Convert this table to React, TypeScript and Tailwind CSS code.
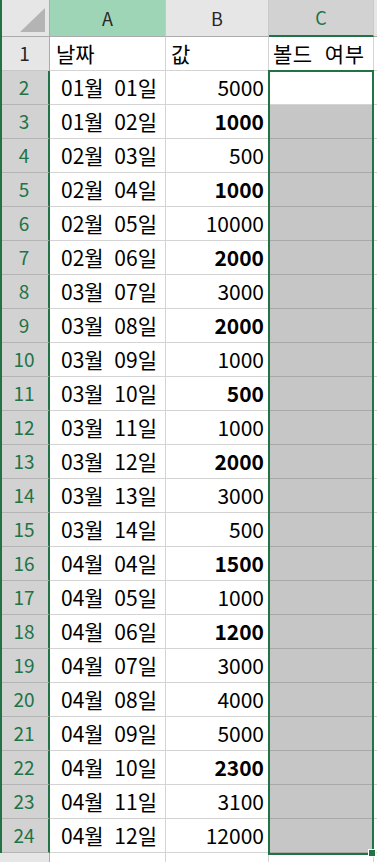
import React from "react";

const data: [string, string, boolean][] = [
  ["01월 01일", "5000", false],
  ["01월 02일", "1000", true],
  ["02월 03일", "500", false],
  ["02월 04일", "1000", true],
  ["02월 05일", "10000", false],
  ["02월 06일", "2000", true],
  ["03월 07일", "3000", false],
  ["03월 08일", "2000", true],
  ["03월 09일", "1000", false],
  ["03월 10일", "500", true],
  ["03월 11일", "1000", false],
  ["03월 12일", "2000", true],
  ["03월 13일", "3000", false],
  ["03월 14일", "500", false],
  ["04월 04일", "1500", true],
  ["04월 05일", "1000", false],
  ["04월 06일", "1200", true],
  ["04월 07일", "3000", false],
  ["04월 08일", "4000", false],
  ["04월 09일", "5000", false],
  ["04월 10일", "2300", true],
  ["04월 11일", "3100", false],
  ["04월 12일", "12000", false],
];

const font = { fontFamily: '"Noto Sans CJK KR", "Noto Sans", sans-serif' };

export default function App() {
  return (
    <div
      className="relative w-[377px] h-[862px] overflow-hidden bg-white text-black"
      style={font}
    >
      <div className="grid grid-cols-[50px_116px_103px_105px_1fr]">
        {/* header row */}
        <div className="h-[37px] bg-[#e6e6e6] border-r border-b border-[#ababab] flex items-end justify-end pr-[3px] pb-[3px]">
          <svg width="26" height="25" viewBox="0 0 26 25">
            <polygon points="25,0 25,24 0,24" fill="#b4b4b4" />
          </svg>
        </div>
        <div className="h-[37px] bg-[#9fd5b7] border-r border-b border-r-[#c8c8c8] border-b-[#ababab] flex items-center justify-center text-[18px] text-[#262626]">
          A
        </div>
        <div className="h-[37px] bg-[#e6e6e6] border-r border-b border-r-[#c8c8c8] border-b-[#ababab] flex items-center justify-center text-[18px] text-[#262626]">
          B
        </div>
        <div className="h-[37px] bg-[#d2d2d2] border-r border-r-[#c8c8c8] border-b-2 border-b-[#217346] flex items-center justify-center text-[18px] text-[#217346]">
          C
        </div>
        <div className="h-[37px] bg-[#e6e6e6] border-b border-[#ababab]" />

        {/* row 1 */}
        <div className="h-[34px] bg-[#e6e6e6] border-r border-b border-r-[#ababab] border-b-[#c8c8c8] flex items-center justify-center text-[19px] text-[#262626]">
          1
        </div>
        <div className="h-[34px] border-r border-b border-[#d4d4d4] flex items-center pl-[6px] text-[21px]">
          날짜
        </div>
        <div className="h-[34px] border-r border-b border-[#d4d4d4] flex items-center pl-[5px] text-[21px]">
          값
        </div>
        <div className="h-[34px] border-r border-b border-[#d4d4d4] flex items-center pl-[4px] text-[21px] whitespace-nowrap [word-spacing:7px] tracking-[0.5px]">
          볼드 여부
        </div>
        <div className="h-[34px] border-b border-[#d4d4d4]" />

        {data.map(([d, v, b], i) => (
          <React.Fragment key={i}>
            <div className="h-[34px] bg-[#d2d2d2] border-r-2 border-b border-r-[#217346] border-b-[#b4b4b4] flex items-center justify-center text-[19px] text-[#217346]">
              {i + 2}
            </div>
            <div className="h-[34px] border-r border-b border-[#d4d4d4] flex items-center pl-[11px] text-[21px] whitespace-nowrap [word-spacing:6px]">
              {d}
            </div>
            <div
              className={
                "h-[34px] border-r border-b border-[#d4d4d4] flex items-center justify-end pr-[4px] text-[21px] " +
                (b ? "font-bold" : "")
              }
            >
              {v}
            </div>
            <div
              className={
                i === 0
                  ? "h-[34px] bg-white border-r border-b border-[#d4d4d4]"
                  : "h-[34px] bg-[#c6c6c6] border-r border-b border-r-[#d4d4d4] border-b-[#a8a8a8]"
              }
            />
            <div className="h-[34px] border-b border-[#d4d4d4]" />
          </React.Fragment>
        ))}

        {/* partial row */}
        <div className="h-[20px] bg-[#e6e6e6] border-r border-[#ababab]" />
        <div className="h-[20px] border-r border-[#d4d4d4]" />
        <div className="h-[20px] border-r border-[#d4d4d4]" />
        <div className="h-[20px] border-r border-[#d4d4d4]" />
        <div className="h-[20px]" />
      </div>

      {/* left window edge */}
      <div className="absolute left-0 top-0 w-[2px] h-[853px] bg-[#217346]" />

      {/* selection border */}
      <div className="absolute left-[268px] top-[70px] w-[106px] h-[785px] border-2 border-[#217346]" />
      {/* fill handle */}
      <div className="absolute left-[368px] top-[849px] w-[8px] h-[8px] bg-[#217346] border border-white" />
    </div>
  );
}
